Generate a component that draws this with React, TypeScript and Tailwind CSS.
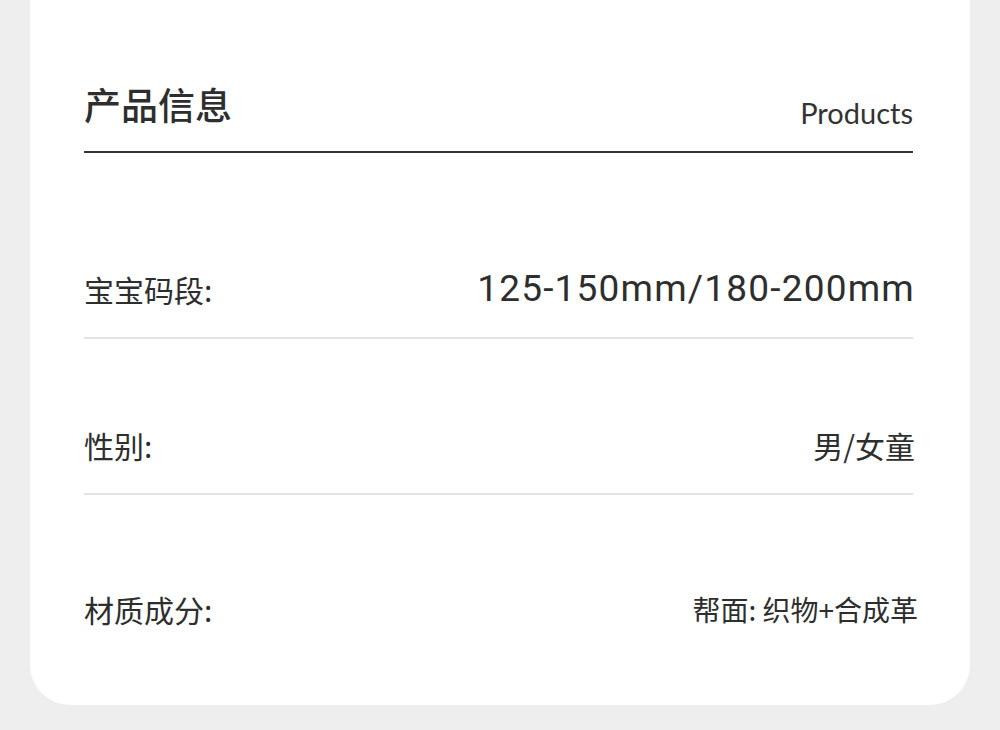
import React from 'react';

const cjk = "font-['Noto_Sans_CJK_SC','Noto_Sans',sans-serif]";

type Row = { label: string; value: string; pt: string; kind: 'num' | 'cjk' | 'small'; divider?: boolean };

const rows: Row[] = [
  { label: '宝宝码段:', value: '125-150mm/180-200mm', pt: 'pt-[118px]', kind: 'num', divider: true },
  { label: '性别:', value: '男/女童', pt: 'pt-[88px]', kind: 'cjk', divider: true },
  { label: '材质成分:', value: '帮面: 织物+合成革', pt: 'pt-[96px]', kind: 'small' },
];

const App: React.FC = () => {
  return (
    <div className="w-[1000px] h-[730px] bg-[#eeeeee] px-[30px] overflow-hidden">
      <div className="h-[705px] bg-white rounded-b-[40px] pl-[54px] pr-[57px]">
        {/* header */}
        <div className="pt-[80px] flex items-end justify-between">
          <h1 className={`${cjk} text-[37px] leading-[48px] font-medium text-[#2e2e2e]`}>产品信息</h1>
          <span className="font-['Lato','Liberation_Sans',sans-serif] text-[29px] leading-none text-[#333] mb-[1px]">
            Products
          </span>
        </div>
        <div className="mt-[23px] h-[1.5px] bg-[#333]" />

        {rows.map((r) => (
          <div key={r.label} className={`${r.pt} ${r.divider ? 'border-b-2 border-[#e3e3e3]' : ''}`}>
            <div className="flex items-center justify-between h-[36px] mb-[30px]">
              <span className={`${cjk} text-[30px] leading-[36px] text-[#2e2e2e]`}>{r.label}</span>
              {r.kind === 'num' && (
                <span className="font-['Roboto','Liberation_Sans',sans-serif] text-[37px] leading-[36px] text-[#2e2e2e] tracking-[1.2px] -mr-[2px]">
                  {r.value}
                </span>
              )}
              {r.kind === 'cjk' && (
                <span className={`${cjk} text-[30px] leading-[36px] text-[#2e2e2e] -mr-[2px]`}>{r.value}</span>
              )}
              {r.kind === 'small' && (
                <span className={`${cjk} text-[28px] leading-[36px] text-[#2e2e2e] -mr-[5px]`}>{r.value}</span>
              )}
            </div>
          </div>
        ))}
      </div>
    </div>
  );
};

export default App;
